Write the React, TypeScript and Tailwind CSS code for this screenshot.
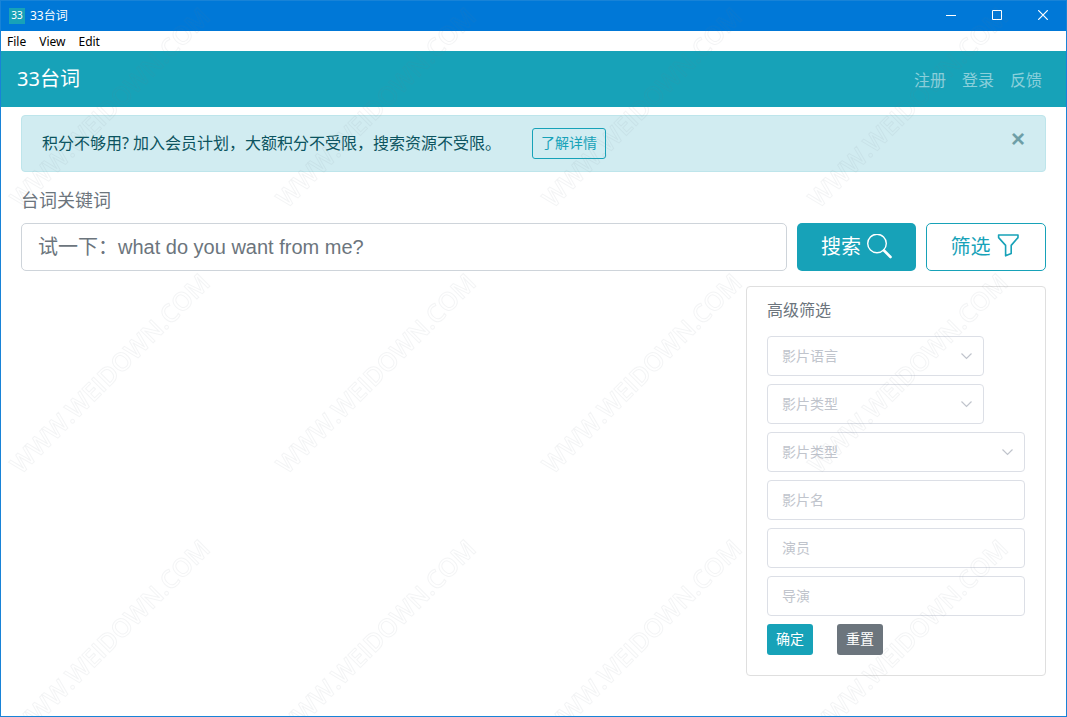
import { useState } from 'react'
import type { ReactNode } from 'react'

const links = ['注册', '登录', '反馈']

export default function App() {
    const [showNotice, setShowNotice] = useState(true)

    return (
        <div className="relative min-h-screen flex flex-col overflow-hidden border border-[#1883d7] bg-white font-['Noto_Sans','Noto_Sans_CJK_SC',sans-serif]">
            <TitleBar />

            {/* Menu */}
            <div className="flex h-5 items-center gap-[13px] px-1.5 pt-0.5 text-xs text-black">
                <button>File</button>
                <button>View</button>
                <button>Edit</button>
            </div>

            {/* Navbar */}
            <nav className="flex h-14 items-baseline justify-between bg-[#17a2b8] pl-4 pr-6 pt-3.5">
                <a href="#" className="text-xl text-white">33台词</a>
                <div className="flex gap-4">
                    {links.map((link) => (
                        <a key={link} href="#" className="text-base text-white/50 hover:text-white/75">
                            {link}
                        </a>
                    ))}
                </div>
            </nav>

            <main className="flex-1 px-5 pt-2 pb-8">
                {showNotice && (
                    <div className="flex h-[57px] items-center rounded border border-[#bee5eb] bg-[#d1ecf1] px-5 text-[#0c5460]">
                        <p className="pb-0.5 text-base">积分不够用? 加入会员计划，大额积分不受限，搜索资源不受限。</p>
                        <button className="ml-[31px] h-[31px] rounded-[3px] border border-[#17a2b8] px-2 pb-0.5 text-sm text-[#17a2b8]">
                            了解详情
                        </button>
                        <button
                            aria-label="Close"
                            onClick={() => setShowNotice(false)}
                            className="ml-auto mb-2.5 flex h-6 w-3.5 items-center justify-center font-['Liberation_Sans',sans-serif] text-2xl font-bold opacity-50"
                        >
                            ×
                        </button>
                    </div>
                )}

                {/* Search */}
                <form onSubmit={(e) => e.preventDefault()}>
                    <label htmlFor="keyword" className="mt-3.5 mb-2 block text-lg leading-[29px] text-[#6c757d]">
                        台词关键词
                    </label>
                    <div className="flex gap-2.5">
                        <input
                            id="keyword"
                            placeholder="试一下：what do you want from me?"
                            className="h-12 min-w-0 flex-1 rounded-[5px] border border-[#ced4da] px-4 font-['Liberation_Sans','Noto_Sans_CJK_SC',sans-serif] text-xl text-[#495057] outline-none placeholder:text-[#6c757d]"
                        />
                        <button className="flex h-12 w-[119px] items-center justify-center gap-[5px] rounded-[5px] bg-[#17a2b8] text-xl text-white">
                            搜索
                            <SearchIcon />
                        </button>
                        <button
                            type="button"
                            className="flex h-12 w-30 items-center justify-center gap-[5px] rounded-[5px] border border-[#17a2b8] text-xl text-[#17a2b8]"
                        >
                            筛选
                            <FunnelIcon />
                        </button>
                    </div>
                </form>

                {/* Advanced filter */}
                <form
                    onSubmit={(e) => e.preventDefault()}
                    className="mt-[15px] ml-auto w-75 rounded border border-[#dfdfdf] px-5 pt-[11px] pb-5"
                >
                    <h2 className="mb-3.5 text-base text-[#6c757d]">高级筛选</h2>
                    <div className="flex flex-col gap-2">
                        <FilterSelect label="影片语言" className="w-[217px]" />
                        <FilterSelect label="影片类型" className="w-[217px]" />
                        <FilterSelect label="影片类型" className="w-full" />
                        <FilterInput label="影片名" />
                        <FilterInput label="演员" />
                        <FilterInput label="导演" />
                        <div className="flex gap-6">
                            <FormButton className="bg-[#17a2b8]">确定</FormButton>
                            <FormButton className="bg-[#6c757d]">重置</FormButton>
                        </div>
                    </div>
                </form>
            </main>

            <Watermark />
        </div>
    )
}

function TitleBar() {
    return (
        <header className="flex h-[30px] items-center bg-[#0078d7] pl-2 text-xs text-white">
            <span className="mr-[5px] flex size-4 items-center justify-center bg-[#17a2b8] text-[10px]">33</span>
            <span>33台词</span>
            <div className="ml-auto flex h-full pb-0.5">
                <WindowButton label="Minimize">
                    <path d="M0 5.5h10" />
                </WindowButton>
                <WindowButton label="Maximize">
                    <path d="M.5.5h9v9h-9z" />
                </WindowButton>
                <WindowButton label="Close window">
                    <path d="M.2.2l9.6 9.6M9.8.2L.2 9.8" strokeWidth="1.2" />
                </WindowButton>
            </div>
        </header>
    )
}

function WindowButton({ label, children }: { label: string; children: ReactNode }) {
    return (
        <button aria-label={label} className="flex h-full w-[46px] items-center justify-center">
            <svg width="10" height="10" viewBox="0 0 10 10" fill="none" stroke="currentColor">
                {children}
            </svg>
        </button>
    )
}

function FilterSelect({ label, className }: { label: string; className: string }) {
    return (
        <div className={`relative ${className}`}>
            <select
                aria-label={label}
                className="h-10 w-full appearance-none rounded border border-[#dcdfe6] bg-transparent pl-3.5 pr-8 text-sm text-[#c0c4cc] outline-none"
            >
                <option>{label}</option>
            </select>
            <svg
                className="pointer-events-none absolute top-4 right-3 text-[#c0c4cc]"
                width="11"
                height="8"
                viewBox="0 0 11 8"
                fill="none"
                stroke="currentColor"
                strokeWidth="1.2"
            >
                <path d="M.5 1.5l5 5 5-5" />
            </svg>
        </div>
    )
}

function FilterInput({ label }: { label: string }) {
    return (
        <input
            aria-label={label}
            placeholder={label}
            className="h-10 w-full rounded border border-[#dcdfe6] px-3.5 pb-0.5 text-sm text-[#606266] outline-none placeholder:text-[#c0c4cc]"
        />
    )
}

function FormButton({ className, children }: { className: string; children: ReactNode }) {
    return <button className={`h-[31px] w-[46px] rounded-[3px] pb-0.5 text-sm text-white ${className}`}>{children}</button>
}

function SearchIcon() {
    return (
        <svg width="26" height="26" viewBox="0 0 26 26" fill="none" stroke="currentColor">
            <circle cx="11" cy="9.5" r="9.3" strokeWidth="1.4" />
            <path d="M18 16.5l6.5 6.5" strokeWidth="2.6" strokeLinecap="round" />
        </svg>
    )
}

function FunnelIcon() {
    return (
        <svg width="26" height="26" viewBox="0 0 26 26" fill="none" stroke="currentColor" strokeWidth="1.6">
            <path d="M2.6 1h19.4v2.6l-6.8 7.8v8.2l-5.6 2.2V11.4L2.6 3.6z" strokeLinejoin="round" />
        </svg>
    )
}

function Watermark() {
    return (
        <svg aria-hidden="true" className="pointer-events-none absolute inset-0 size-full">
            <defs>
                <pattern id="watermark" width="266" height="266" patternUnits="userSpaceOnUse">
                    <text
                        transform="translate(20 208) rotate(-45)"
                        className="fill-transparent stroke-gray-500/8 font-['Open_Sans',sans-serif] text-[25px] font-semibold"
                    >
                        WWW.WEIDOWN.COM
                    </text>
                </pattern>
            </defs>
            <rect width="100%" height="100%" fill="url(#watermark)" />
        </svg>
    )
}
